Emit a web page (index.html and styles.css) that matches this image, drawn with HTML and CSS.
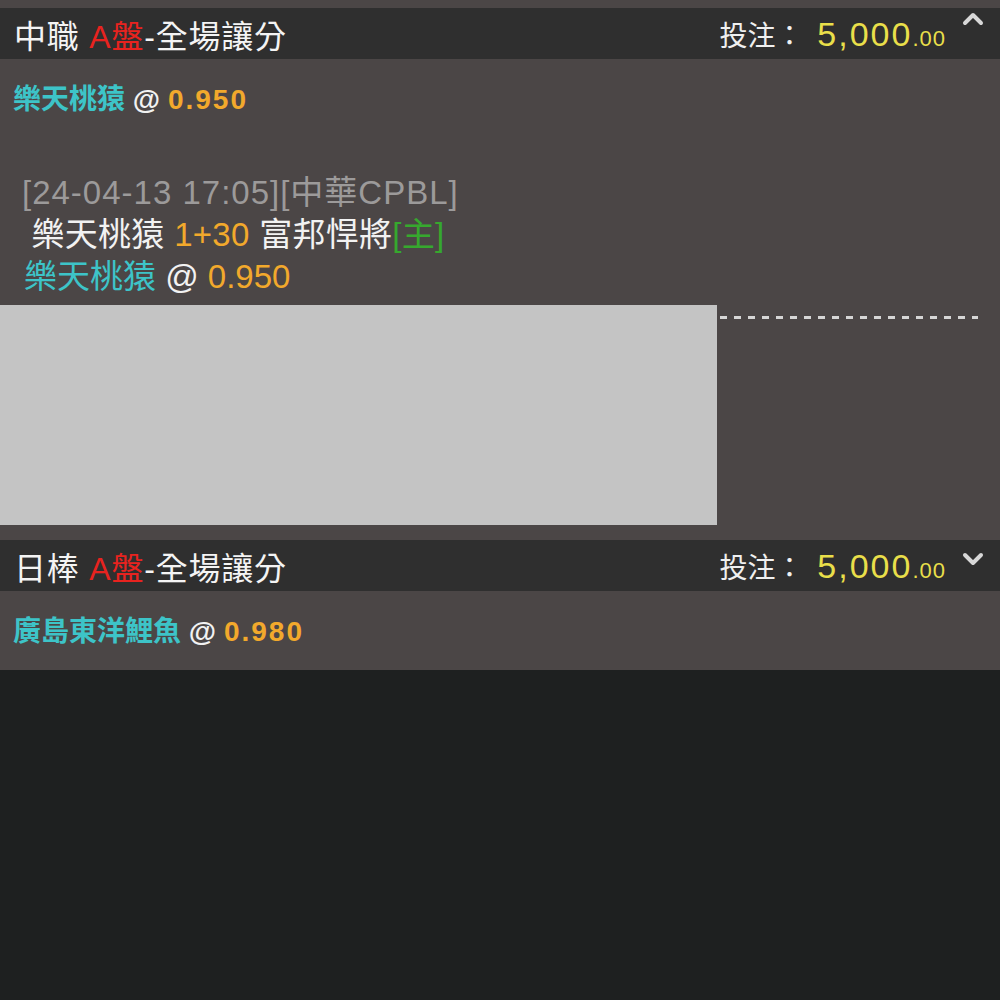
FILE: index.html
```html
<!DOCTYPE html>
<html lang="zh-Hant">
<head>
    <meta charset="UTF-8">
    <meta name="viewport" content="width=device-width, initial-scale=1.0">
    <title>注單</title>
    <link rel="stylesheet" href="styles.css">
</head>
<body>
    <div class="top-gap"></div>

    <div class="bet-header">
        <div class="bet-title">中職 <span class="red">A盤</span>-全場讓分</div>
        <div class="bet-amount">投注： <span class="money">5,000<span class="cents">.00</span></span></div>
        <svg class="chevron chevron-up" width="22" height="14" viewBox="0 0 22 14">
            <polyline points="3,11 11,3 19,11" fill="none" stroke="#d8d8d8" stroke-width="4" stroke-linecap="round" stroke-linejoin="round"/>
        </svg>
    </div>
    <div class="bet-body open">
        <p class="bet-pick"><span class="team">樂天桃猿</span> @ <span class="odds">0.950</span></p>

        <div class="bet-detail">
            <p class="detail-time">[24-04-13 17:05][中華CPBL]</p>
            <p class="detail-match">&nbsp;樂天桃猿 <span class="orange">1+30</span> 富邦悍將<span class="green">[主]</span></p>
            <p class="detail-pick"><span class="team">樂天桃猿</span> @ <span class="orange">0.950</span></p>
        </div>

        <div class="ticket-row">
            <div class="ticket-box"></div>
            <div class="ticket-dash"></div>
        </div>
    </div>

    <div class="bet-header">
        <div class="bet-title">日棒 <span class="red">A盤</span>-全場讓分</div>
        <div class="bet-amount">投注： <span class="money">5,000<span class="cents">.00</span></span></div>
        <svg class="chevron chevron-down" width="22" height="14" viewBox="0 0 22 14">
            <polyline points="3,3 11,11 19,3" fill="none" stroke="#d8d8d8" stroke-width="4" stroke-linecap="round" stroke-linejoin="round"/>
        </svg>
    </div>
    <div class="bet-body">
        <p class="bet-pick"><span class="team">廣島東洋鯉魚</span> @ <span class="odds">0.980</span></p>
    </div>
</body>
</html>
```

FILE: styles.css
```css
body {
    margin: 0;
    background-color: #1e2020;
    font-family: "Liberation Sans", "Noto Sans CJK TC", sans-serif;
    color: #f2f2f2;
}
p {
    margin: 0;
}
.top-gap {
    height: 8px;
    background-color: #4b4646;
}
.bet-header {
    display: flex;
    align-items: center;
    height: 51px;
    padding-left: 14px;
    background-color: #2f2f2f;
    position: relative;
}
.bet-title {
    flex: 1;
    font-size: 32px;
    color: #f4f4f4;
    letter-spacing: 0.8px;
}
.red {
    color: #e8231f;
}
.bet-amount {
    font-size: 28px;
    color: #f0f0f0;
    margin-right: 54px;
}
.money {
    color: #e9df4a;
    font-size: 34px;
    letter-spacing: 2px;
    margin-left: 6px;
}
.cents {
    font-size: 22px;
    letter-spacing: 1px;
}
.chevron {
    position: absolute;
    right: 16px;
}
.chevron-up {
    top: 4px;
}
.chevron-down {
    top: 12px;
}
.bet-body {
    background-color: #4b4646;
    padding: 20px 0 17px;
}
.bet-body.open {
    padding-bottom: 15px;
}
.bet-pick {
    padding-left: 13px;
    font-size: 28px;
    font-weight: bold;
    line-height: 42px;
}
.team {
    color: #3dc4c8;
}
.odds {
    color: #f2a92c;
    letter-spacing: 2px;
}
.bet-detail {
    margin-top: 51px;
    padding-left: 22px;
    font-size: 33px;
    line-height: 42px;
}
.detail-time {
    color: #9c9a9a;
    letter-spacing: 1px;
}
.detail-match {
    letter-spacing: 0.3px;
}
.detail-pick {
    padding-left: 2px;
}
.orange {
    color: #f2a92c;
}
.green {
    color: #36a82e;
}
.ticket-row {
    display: flex;
    align-items: flex-start;
    margin-top: 7px;
}
.ticket-box {
    width: 717px;
    height: 220px;
    background-color: #c4c4c4;
}
.ticket-dash {
    width: 258px;
    height: 3px;
    margin: 11px 0 0 3px;
    background: repeating-linear-gradient(90deg, #d6d6d6 0 7px, transparent 7px 14px);
}
```
